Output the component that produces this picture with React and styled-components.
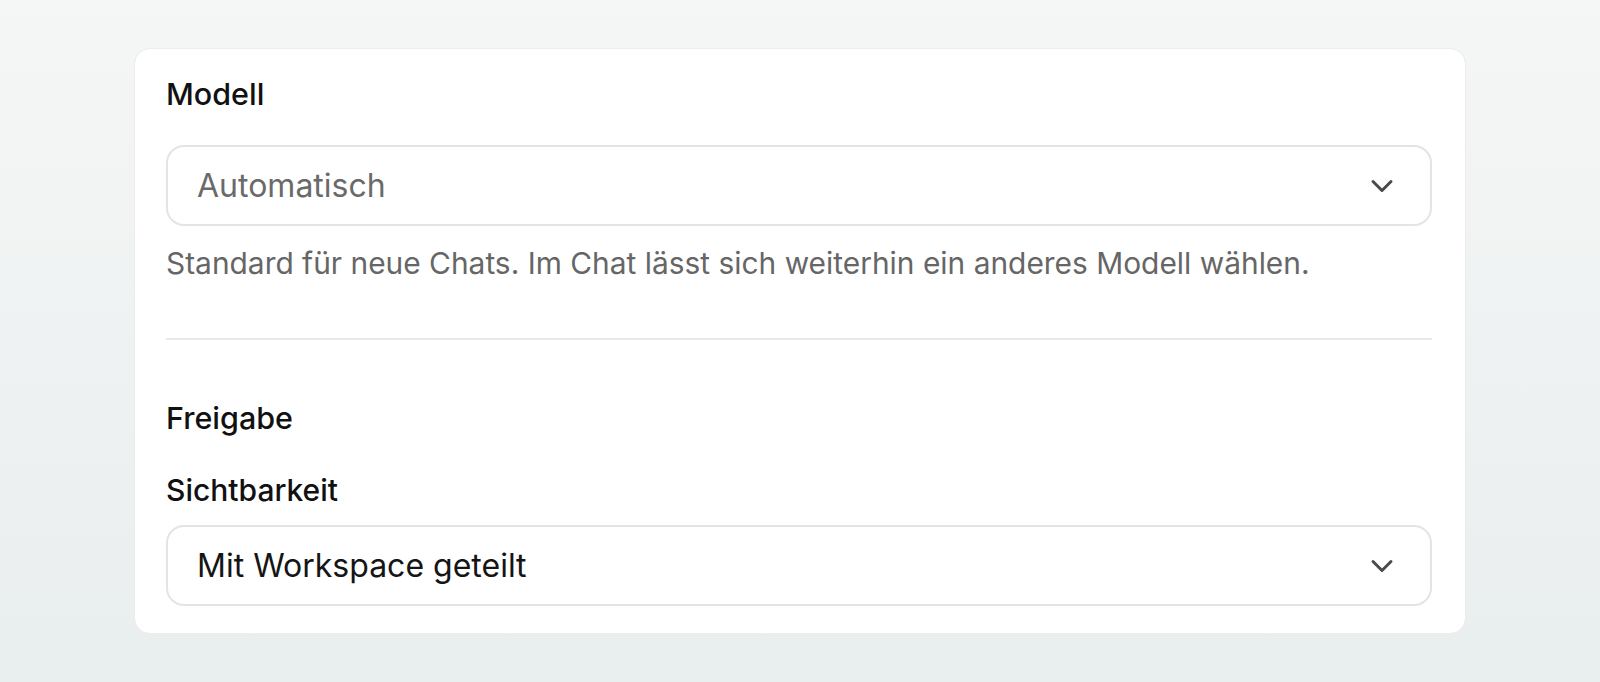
import React from 'react'
import styled, { createGlobalStyle } from 'styled-components'
import { ChevronDown } from 'lucide-react'

const GlobalStyle = createGlobalStyle`
  html, body {
    margin: 0;
    padding: 0;
  }
  body {
    font-family: Inter, "Noto Sans", "Liberation Sans", sans-serif;
    background: linear-gradient(180deg, #f5f6f6 0%, #e9eeee 100%);
    min-height: 682px;
  }
`;

const Page = styled.div`
  padding: 48px 134px 0 134px;
`;

const Card = styled.div`
  background: #ffffff;
  border: 1px solid #ececec;
  border-radius: 16px;
  padding: 27px 33px 27px 31px;
  display: flex;
  flex-direction: column;
`;

const SectionTitle = styled.h2`
  margin: 0 0 ${p => p.$gap}px 0;
  font-size: 30.5px;
  line-height: 36px;
  font-weight: 500;
  color: #111111;
`;

const FieldLabel = styled.label`
  display: block;
  margin: 0 0 17px 0;
  font-size: 30px;
  line-height: 36px;
  font-weight: 500;
  color: #111111;
`;

const Select = styled.button`
  display: flex;
  align-items: center;
  justify-content: space-between;
  width: 100%;
  height: 81px;
  box-sizing: border-box;
  padding: 0 30px 0 29px;
  background: #ffffff;
  border: 2px solid #e4e4e4;
  border-radius: 18px;
  font-family: inherit;
  font-size: 32px;
  color: ${p => (p.$placeholder ? '#6a6a6a' : '#151515')};
  cursor: pointer;
  text-align: left;
`;

const Hint = styled.p`
  margin: 17px 0 0 0;
  font-size: 29.9px;
  line-height: 40px;
  color: #666666;
`;

const Divider = styled.hr`
  margin: 55px 0 60px 0;
  border: none;
  height: 2px;
  background: #e9e9e9;
`;

const Chevron = styled(ChevronDown)`
  color: #4a4a4a;
  flex-shrink: 0;
`;

const App = () => {
  return (
    <Page>
      <GlobalStyle />
      <Card>
        <SectionTitle $gap={33}>Modell</SectionTitle>
        <Select $placeholder>
          <span>Automatisch</span>
          <Chevron size={36} strokeWidth={2} />
        </Select>
        <Hint>Standard für neue Chats. Im Chat lässt sich weiterhin ein anderes Modell wählen.</Hint>

        <Divider />

        <SectionTitle $gap={36}>Freigabe</SectionTitle>
        <FieldLabel>Sichtbarkeit</FieldLabel>
        <Select>
          <span>Mit Workspace geteilt</span>
          <Chevron size={36} strokeWidth={2} />
        </Select>
      </Card>
    </Page>
  )
}

export default App
